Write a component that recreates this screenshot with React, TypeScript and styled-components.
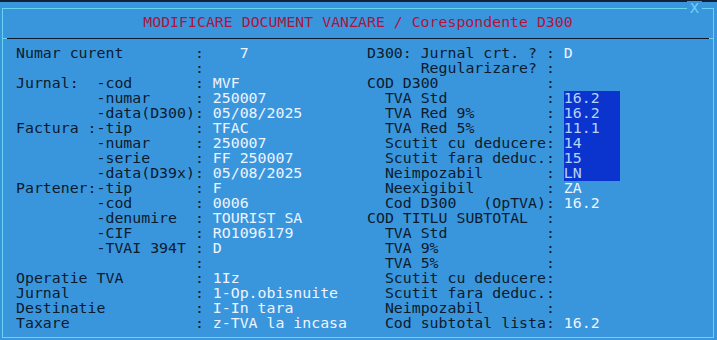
import { FC } from 'react';
import styled, { createGlobalStyle } from 'styled-components';

const colors = {
  page: '#3a96dc',
  strip: '#0f2236',
  frame: '#66d4f2',
  rule: '#0b1a2e',
  title: '#b0133f',
  label: '#0c1a2d',
  value: '#eef4ff',
  fieldBg: '#0b34cf',
  fieldText: '#b4d4fa',
};

const GlobalStyle = createGlobalStyle`
  html, body {
    margin: 0;
    padding: 0;
    background: ${colors.page};
    overflow: hidden;
  }

  body {
    font-family: 'DejaVu Sans Mono', 'Liberation Mono', monospace;
    font-size: 14.87px;
  }
`;

const TopStrip = styled.div`
  height: 2px;
  background: ${colors.strip};
`;

const Window = styled.section`
  position: relative;
  box-sizing: border-box;
  width: 712px;
  height: 330px;
  margin: 6px 0 0 2px;
  border: 1px solid ${colors.frame};
  display: flex;
  flex-direction: column;
`;

const CloseMark = styled.span`
  position: absolute;
  top: -8px;
  right: 11px;
  padding: 0 3px;
  line-height: 15px;
  background: ${colors.page};
  color: ${colors.frame};
`;

const Title = styled.h1`
  margin: 0;
  height: 29px;
  box-sizing: border-box;
  padding-top: 6px;
  font-size: inherit;
  font-weight: normal;
  line-height: 15px;
  text-align: center;
  white-space: pre;
  color: ${colors.title};
`;

const Divider = styled.div`
  display: flex;
  height: 1px;
`;

const Tick = styled.span`
  width: 4px;
  background: ${colors.frame};
`;

const Rule = styled.span`
  flex: 1;
  background: ${colors.rule};
`;

const Body = styled.div`
  display: grid;
  grid-template-columns: 351px 1fr;
  padding: 7px 0 0 13px;
`;

const Column = styled.div`
  display: flex;
  flex-direction: column;
`;

const Row = styled.div`
  display: grid;
  grid-template-columns: 20ch 2ch auto;
  height: 15px;
  line-height: 15px;
  white-space: pre;
`;

const Label = styled.span<{ $indent?: number }>`
  padding-left: ${(p) => p.$indent ?? 0}ch;
  color: ${colors.label};
`;

const Colon = styled.span`
  color: ${colors.label};
`;

const Value = styled.span<{ $field?: boolean }>`
  justify-self: start;
  width: ${(p) => (p.$field ? '56px' : 'auto')};
  background: ${(p) => (p.$field ? colors.fieldBg : 'transparent')};
  color: ${(p) => (p.$field ? colors.fieldText : colors.value)};
`;

type Line = {
  label?: string;
  indent?: number;
  value?: string;
  field?: boolean;
};

const left: Line[] = [
  { label: 'Numar curent', value: '   7' },
  {},
  { label: 'Jurnal:  -cod', value: 'MVF' },
  { label: '-numar', indent: 9, value: '250007' },
  { label: '-data(D300)', indent: 9, value: '05/08/2025' },
  { label: 'Factura :-tip', value: 'TFAC' },
  { label: '-numar', indent: 9, value: '250007' },
  { label: '-serie', indent: 9, value: 'FF 250007' },
  { label: '-data(D39x)', indent: 9, value: '05/08/2025' },
  { label: 'Partener:-tip', value: 'F' },
  { label: '-cod', indent: 9, value: '0006' },
  { label: '-denumire', indent: 9, value: 'TOURIST SA' },
  { label: '-CIF', indent: 9, value: 'RO1096179' },
  { label: '-TVAI 394T', indent: 9, value: 'D' },
  {},
  { label: 'Operatie TVA', value: '1Iz' },
  { label: 'Jurnal', value: '1-Op.obisnuite' },
  { label: 'Destinatie', value: 'I-In tara' },
  { label: 'Taxare', value: 'z-TVA la incasa' },
];

const right: Line[] = [
  { label: 'D300: Jurnal crt. ?', value: 'D' },
  { label: 'Regularizare?', indent: 6 },
  { label: 'COD D300' },
  { label: 'TVA Std', indent: 2, value: '16.2', field: true },
  { label: 'TVA Red 9%', indent: 2, value: '16.2', field: true },
  { label: 'TVA Red 5%', indent: 2, value: '11.1', field: true },
  { label: 'Scutit cu deducere', indent: 2, value: '14', field: true },
  { label: 'Scutit fara deduc.', indent: 2, value: '15', field: true },
  { label: 'Neimpozabil', indent: 2, value: 'LN', field: true },
  { label: 'Neexigibil', indent: 2, value: 'ZA' },
  { label: 'Cod D300   (OpTVA)', indent: 2, value: '16.2' },
  { label: 'COD TITLU SUBTOTAL' },
  { label: 'TVA Std', indent: 2 },
  { label: 'TVA 9%', indent: 2 },
  { label: 'TVA 5%', indent: 2 },
  { label: 'Scutit cu deducere', indent: 2 },
  { label: 'Scutit fara deduc.', indent: 2 },
  { label: 'Neimpozabil', indent: 2 },
  { label: 'Cod subtotal lista', indent: 2, value: '16.2' },
];

const Fields: FC<{ lines: Line[] }> = ({ lines }) => (
  <Column>
    {lines.map((line, i) => (
      <Row key={i}>
        <Label $indent={line.indent}>{line.label ?? ''}</Label>
        <Colon>:</Colon>
        <Value $field={line.field}>{line.value ?? ''}</Value>
      </Row>
    ))}
  </Column>
);

const App: FC = () => (
  <>
    <GlobalStyle />
    <TopStrip />
    <Window>
      <CloseMark>X</CloseMark>
      <Title>MODIFICARE DOCUMENT VANZARE / Corespondente D300</Title>
      <Divider>
        <Tick />
        <Rule />
        <Tick />
      </Divider>
      <Body>
        <Fields lines={left} />
        <Fields lines={right} />
      </Body>
    </Window>
  </>
);

export default App;
